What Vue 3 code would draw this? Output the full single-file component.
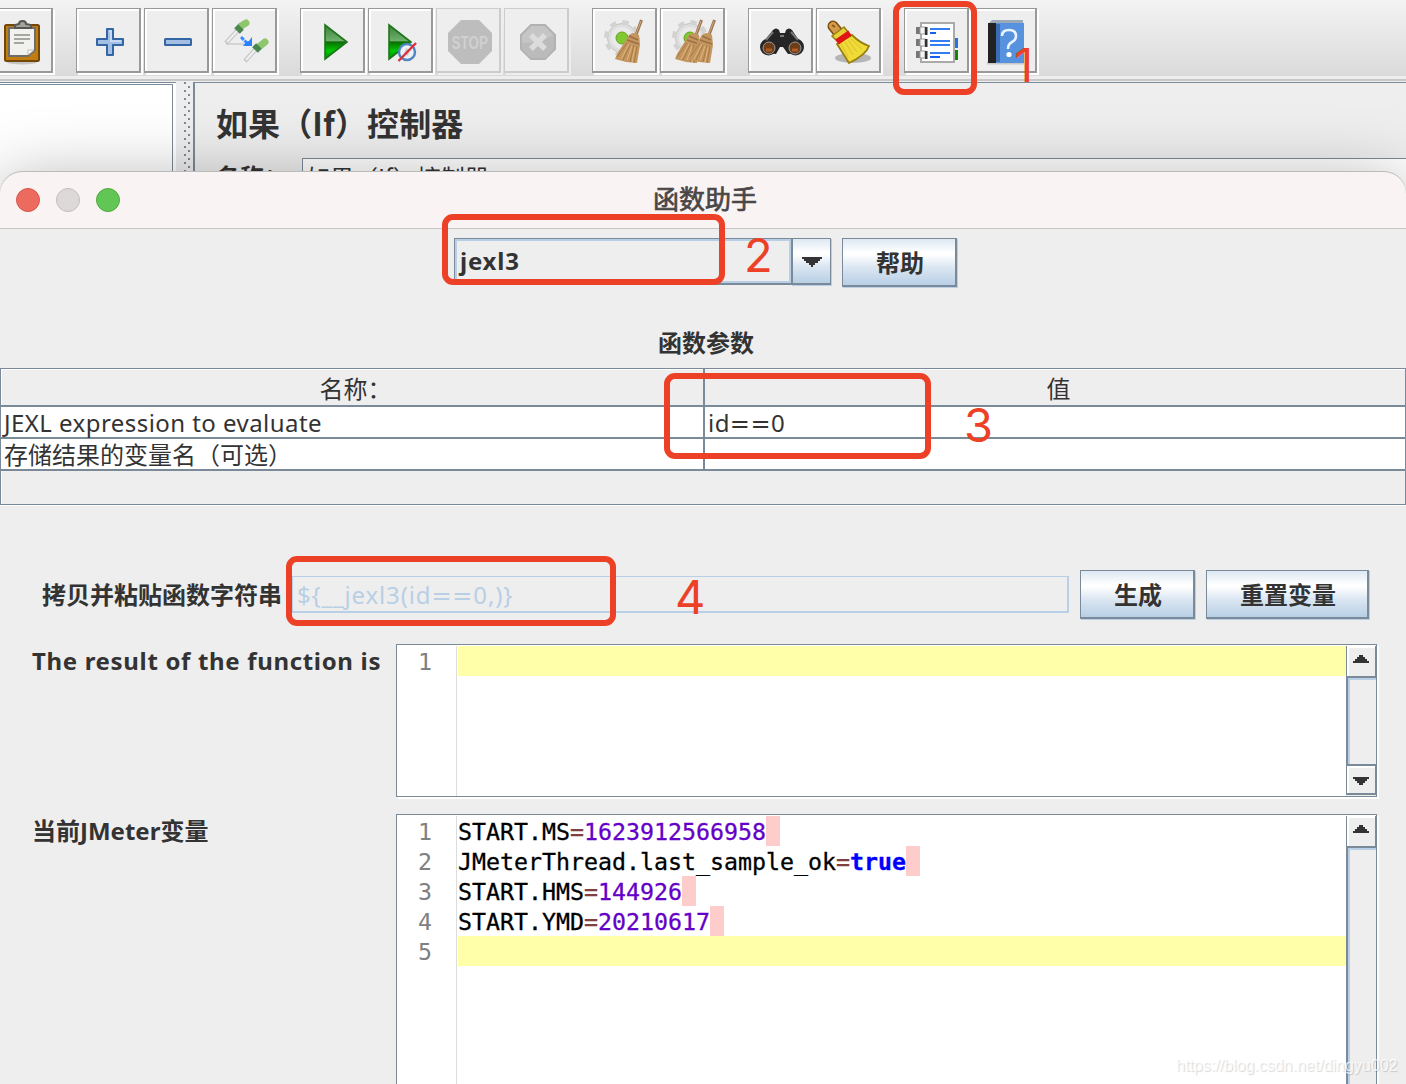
<template>
  <div class="screen">
    <div class="main-window">
      <div class="toolbar">
        <div v-for="(group, gi) in toolbar" :key="gi" class="tool-group">
          <button v-for="name in group" :key="name" class="tool" :class="{ disabled: name === 'stop' || name === 'shutdown' }">
            <svg v-if="name === 'paste'" viewBox="0 0 62 62">
              <ellipse cx="33" cy="53" rx="15" ry="2.5" fill="#c4c4c4" />
              <rect x="16" y="16" width="34" height="36" rx="1.5" fill="#c17d11" stroke="#744706" stroke-width="2" />
              <path d="M20 19h26v22l-7 6H20z" fill="#f1f1ee" stroke="#6d6d6a" stroke-width="2" />
              <path d="M39 46v-5h6z" fill="#fff" stroke="#bbb" />
              <path d="M25 26h16M25 30h16M25 34h10" stroke="#a5a5a2" stroke-width="2" />
              <path d="M26 19v-3l4-1c0-4 7-4 7 0l5 1v3z" fill="#a3a599" stroke="#555753" stroke-width="2" />
            </svg>
            <svg v-else-if="name === 'add'" viewBox="0 0 62 62">
              <path d="M30 20h6v10h10v6H36v10h-6V36H20v-6h10z" fill="#a3c0e4" stroke="#3465a4" stroke-width="2" stroke-linejoin="round" />
              <path d="M32 22h2v10h10" fill="none" stroke="#c6d9f0" stroke-width="2" />
            </svg>
            <svg v-else-if="name === 'remove'" viewBox="0 0 62 62">
              <rect x="20" y="30" width="26" height="6" rx=".5" fill="#a3c0e4" stroke="#3465a4" stroke-width="2" />
            </svg>
            <svg v-else-if="name === 'toggle'" viewBox="0 0 62 62">
              <path d="M13 35h18" stroke="#d4d4d4" stroke-width="2" />
              <path d="M25 21L13 34M43 40L32 52" stroke="#c4c4c4" stroke-width="4.5" />
              <path d="M25 21L14 33M43 40L33 51" stroke="#eee" stroke-width="2.5" />
              <path d="M28 17l5-3M47 37l5-4" stroke="#8dc66b" stroke-width="7" stroke-linecap="round" />
              <path d="M24 22l4-4M42 41l4-4" stroke="#4a8750" stroke-width="8" />
              <path d="M28 28l6 6" stroke="#3f8cff" stroke-width="3" stroke-dasharray="4 1" />
              <path d="M39 28v9H30l3-4 3-1z" fill="#2a80ff" />
            </svg>
            <svg v-else-if="name === 'start' || name === 'startNoPause'" viewBox="0 0 62 62">
              <defs>
                <linearGradient :id="name + 'Fill'" x1="0" y1="0" x2="0" y2="1">
                  <stop offset="0" stop-color="#3f7f3d" />
                  <stop offset=".46" stop-color="#6faf6c" />
                  <stop offset=".5" stop-color="#0b6d06" />
                  <stop offset=".75" stop-color="#00c400" />
                  <stop offset="1" stop-color="#009300" />
                </linearGradient>
              </defs>
              <path :transform="name === 'start' ? '' : 'translate(-4 0)'" d="M24 16v34l22-17z" :fill="`url(#${name}Fill)`" stroke="#1d751b" stroke-width="1.6" />
              <g v-if="name === 'startNoPause'">
                <circle cx="38" cy="43" r="8" fill="#edf1f5" stroke="#4d86c1" stroke-width="2.4" />
                <path d="M37 39l4 2-2 6-4-2z" fill="#c9cdd2" />
                <path d="M29.5 52L47 34" stroke="#dc3038" stroke-width="2.4" />
              </g>
            </svg>
            <svg v-else-if="name === 'stop'" viewBox="0 0 62 62">
              <path d="M24 11h18l13 13v18L42 55H24L11 42V24z" fill="#bdbdbd" />
              <text transform="translate(14.5 40) scale(.71 1)" class="stop-text">STOP</text>
            </svg>
            <svg v-else-if="name === 'shutdown'" viewBox="0 0 62 62">
              <path d="M26 16h14l10 10v14L40 50H26L16 40V26z" fill="#c5c5c5" stroke="#b2b2b2" stroke-width="2" />
              <path d="M17 34q17 0 32-8v14l-9 9H26l-9-9z" fill="#bbb" />
              <path d="M26 26l14 14M40 26L26 40" stroke="#dcdcdc" stroke-width="5.5" />
            </svg>
            <svg v-else-if="name === 'clear' || name === 'clearAll'" viewBox="0 0 62 62">
              <g transform="translate(29 29)">
                <circle r="14.5" fill="#dedede" stroke="#c4c4c4" />
                <circle r="15.8" fill="none" stroke="#d2d2d2" stroke-width="4.5" stroke-dasharray="6.2 6.2" />
                <circle r="11" fill="#e9e9e9" />
                <circle r="6" fill="#80c931" stroke="#62a31c" />
              </g>
              <g v-for="dx in (name === 'clear' ? [0] : [-8, 5])" :key="dx" :transform="`translate(${dx} 0)`">
                <path d="M48.500 11L43 26" stroke="#9b7452" stroke-width="3" />
                <path d="M48 12l-5 13" stroke="#d1ab7e" stroke-width="1" />
                <path d="M36 26q5-4 10 0l1 10-3 18-11-1-11-3 2-5z" fill="#c4965f" />
                <path d="M36 27l9 4M34 31l12 4" stroke="#9c7042" stroke-width="1.5" />
                <path d="M34 34L24 48M37 36l-7 15M41 36l-4 17M44 37l-3 17" stroke="#a67843" stroke-width="1" />
                <path d="M36 35l-8 15M39 37l-5 14M42 38l-3 15" stroke="#e0b57d" stroke-width="1" />
              </g>
            </svg>
            <svg v-else-if="name === 'search'" viewBox="0 0 62 62">
              <path d="M24 21q3-3 6 0l1 3h5l1-3q3-3 6 0l10 15-5 8-9 1-5-7h-3l-4 7-10-1-5-8z" fill="#252525" />
              <circle cx="19.500" cy="38" r="8.500" fill="#262626" />
              <circle cx="46.500" cy="38" r="8.500" fill="#262626" />
              <circle cx="20" cy="39" r="6" fill="#6e3d18" stroke="#999" />
              <circle cx="46" cy="39" r="6" fill="#6e3d18" stroke="#999" />
              <path d="M17 41h6M43 41h6" stroke="#a85e25" stroke-width="3" />
              <path d="M24 23l-7 8M42 23l7 8M31 27h4" stroke="#777" stroke-width="2" />
            </svg>
            <svg v-else-if="name === 'reset'" viewBox="0 0 62 62">
              <ellipse cx="36" cy="49" rx="18" ry="5" fill="#b5b5b5" />
              <path d="M16 17l8 10" stroke="#7e4c0d" stroke-width="11" stroke-linecap="round" />
              <path d="M16 17l8 10" stroke="#d49b4c" stroke-width="8" stroke-linecap="round" />
              <path d="M15 16l3 2" stroke="#8f5a18" stroke-width="2" />
              <path d="M15 27l12-9 4 5-11 9z" fill="#e8cf36" stroke="#958010" stroke-width="1.500" />
              <path d="M35 26q8 8 17 11-3 9-20 17-5-8-12-19z" fill="#f0da38" stroke="#958010" stroke-width="1.800" />
              <path d="M24 35l7 13M28 33l8 13M31 31l9 12M34 30l11 10" stroke="#dcc02a" stroke-width="1" />
              <path d="M20 33L33 24" stroke="#e01515" stroke-width="6" />
            </svg>
            <svg v-else-if="name === 'functions'" viewBox="0 0 62 62">
              <rect x="48" y="29" width="5" height="10" fill="#2b70dc" />
              <rect x="48" y="41" width="5" height="10" fill="#158506" />
              <rect x="16" y="14" width="33" height="39" fill="#fff" stroke="#aaa" stroke-width="2" />
              <g v-for="y in [18, 30, 42]" :key="y">
                <rect x="11" :y="y" width="5" height="7" fill="#777" />
                <rect x="15" :y="y" width="5" height="7" fill="#f4f4f4" stroke="#999" />
                <rect x="20" :y="y" width="2.500" height="8" fill="#333" />
              </g>
              <path d="M25 20h20M25 32h20M25 36h20M25 44h20" stroke="#347cf2" stroke-width="2" />
              <path d="M25 24h6M25 48h10" stroke="#1260ee" stroke-width="2" />
            </svg>
            <svg v-else viewBox="0 0 62 62">
              <path d="M14 54h37" stroke="#c8c8c8" stroke-width="3" />
              <path d="M15 15l4-4h31v4z" fill="#9ca9b8" />
              <path d="M15 14h9v40h-9z" fill="#222" />
              <path d="M23 14h28v40H23z" fill="#5792df" />
              <path d="M23 15h4v38h-4z" fill="#3a6db4" />
              <path d="M29 27q0-6 7-6t7 6q0 4-4 6t-4 7" fill="none" stroke="#eaf3ff" stroke-width="2.600" />
              <circle cx="36" cy="45.500" r="2.600" fill="#fff" />
            </svg>
          </button>
        </div>
      </div>
      <div class="workspace">
        <div class="tree-pane"></div>
        <div class="splitter"></div>
        <div class="editor-pane">
          <h1>如果（If）控制器</h1>
          <div class="name-row">
            <label>名称：</label>
            <div class="name-field">如果（If）控制器</div>
          </div>
        </div>
      </div>
    </div>

    <div class="dialog">
      <div class="title-bar">
        <div class="lights">
          <i class="close"></i><i class="minimize"></i><i class="zoom"></i>
        </div>
        <div class="window-title">函数助手</div>
      </div>

      <div class="picker">
        <div class="combo">
          <div class="combo-value">jexl3</div>
          <div class="combo-arrow">
            <svg width="20" height="10" viewBox="0 0 20 10" shape-rendering="crispEdges"><path d="M0 0h20v2h-2v2h-2v2h-3v2h-2v2H9V8H7V6H4V4H2V2H0z" fill="#333" /></svg>
          </div>
        </div>
        <button class="metal help">帮助</button>
      </div>

      <div class="params-title">函数参数</div>
      <div class="params">
        <div class="tr head"><div class="cell">名称：</div><div class="cell">值</div></div>
        <div class="tr">
          <div class="cell latin">JEXL expression to evaluate</div>
          <div class="cell latin">id<span class="wide">==</span>0</div>
        </div>
        <div class="tr">
          <div class="cell">存储结果的变量名（可选）</div>
          <div class="cell"></div>
        </div>
      </div>

      <div class="result-row">
        <label>拷贝并粘贴函数字符串</label>
        <div class="result-field">${__jexl3(id<span class="wide">==</span>0,)}</div>
        <button class="metal generate">生成</button>
        <button class="metal reset">重置变量</button>
      </div>

      <div v-for="area in areas" :key="area.label" class="area-row" :class="area.kind">
        <label>{{ area.label }}</label>
        <div class="editor">
          <div class="gutter">
            <div v-for="(line, i) in area.lines" :key="i" class="number">{{ i + 1 }}</div>
          </div>
          <div class="code">
            <div v-for="(line, i) in area.lines" :key="i" class="line" :class="{ current: !line.key }">
              <template v-if="line.key">{{ line.key }}<span class="op">=</span><span :class="line.type">{{ line.value }}</span><span class="eol"></span></template>
            </div>
          </div>
          <div class="scrollbar">
            <div class="scroll-button">
              <svg width="16" height="8" viewBox="0 0 16 8" shape-rendering="crispEdges"><path d="M0 8V6h2V4h2V2h2V0h4v2h2v2h2v2h2v2z" fill="#333" /></svg>
            </div>
            <div class="track"></div>
            <div class="scroll-button down">
              <svg width="16" height="8" viewBox="0 0 16 8" shape-rendering="crispEdges"><path d="M0 0v2h2v2h2v2h2v2h4V6h2V4h2V2h2V0z" fill="#333" /></svg>
            </div>
          </div>
        </div>
      </div>
    </div>

    <!-- numbered step marks over the windows -->
    <div v-for="n in 4" :key="n" class="mark" :class="'mark-' + n"></div>
    <div v-for="n in 4" :key="'n' + n" class="step" :class="'step-' + n">{{ n }}</div>
    <div class="watermark">https://blog.csdn.net/dingyu002</div>
  </div>
</template>

<script setup>
const toolbar = [
  ['paste'],
  ['add', 'remove', 'toggle'],
  ['start', 'startNoPause', 'stop', 'shutdown'],
  ['clear', 'clearAll'],
  ['search', 'reset'],
  ['functions', 'help'],
];

const areas = [
  { label: 'The result of the function is', kind: 'short', lines: [{}] },
  {
    label: '当前JMeter变量',
    kind: 'tall',
    lines: [
      { key: 'START.MS', value: '1623912566958', type: 'num' },
      { key: 'JMeterThread.last_sample_ok', value: 'true', type: 'bool' },
      { key: 'START.HMS', value: '144926', type: 'num' },
      { key: 'START.YMD', value: '20210617', type: 'num' },
      {},
    ],
  },
];
</script>

<style>
body {
  margin: 0;
  background: #eee;
}
</style>

<style scoped>
.screen {
  position: relative;
  width: 1406px;
  height: 1084px;
  overflow: hidden;
  background: #eee;
  color: #333;
  font-family: "Noto Sans", "Noto Sans CJK SC", sans-serif;
  font-size: 24px;
}

.screen * {
  box-sizing: border-box;
}

button {
  font: inherit;
  color: inherit;
  margin: 0;
  padding: 0;
}

/* main window */
.toolbar {
  display: flex;
  gap: 23px;
  height: 82px;
  padding-top: 8px;
  margin-left: -12px;
  background: linear-gradient(#f3f3f3 0, #dadada 76px, #eee 76px, #eee 79px, #c8c8c8 79px, #c8c8c8 81px, #eee 81px);
}

.tool-group {
  display: flex;
  gap: 3px;
}

.tool {
  width: 65px;
  height: 65px;
  background: #eee;
  border: solid #999;
  border-width: 1px 2px 2px 1px;
  box-shadow: inset 2px 2px #fff, 2px 2px #fff;
}

.tool.disabled {
  border-color: #ccc;
  box-shadow: 2px 2px #eee;
}

.tool svg {
  display: block;
  width: 62px;
  height: 62px;
}

.stop-text {
  font: bold 19px "Liberation Sans", sans-serif;
  fill: #d0d0d0;
}

.workspace {
  display: flex;
  height: 110px;
}

.tree-pane {
  width: 176px;
  border-top: 1px solid #7a8a99;
  background: linear-gradient(#7a8a99, #7a8a99) 0 1px / 172px 1px no-repeat, linear-gradient(#7a8a99, #7a8a99) 172px 1px / 1px 110px no-repeat, #fff;
}

.splitter {
  width: 17px;
  background: radial-gradient(circle at 2px 2px, #7a8a99 1.2px, transparent 1.3px) 7px 7px / 8px 8px repeat-y, radial-gradient(circle at 2px 2px, #7a8a99 1.2px, transparent 1.3px) 11px 11px / 8px 8px repeat-y, #eee;
}

.editor-pane {
  flex: 1;
  border-top: 1px solid #7a8a99;
  border-left: 2px solid #7a8a99;
  padding: 17px 0 0 21px;
  font-family: "Noto Sans CJK SC", sans-serif;
}

h1 {
  margin: 0;
  height: 58px;
  font-size: 32px;
  line-height: 45px;
  letter-spacing: .1px;
}

.name-row {
  display: flex;
  line-height: 35px;
}

.name-row label {
  width: 86px;
  font-weight: bold;
}

.name-field {
  flex: 1;
  height: 36px;
  padding-left: 3px;
  border: 1px solid #7a8a99;
  border-right: 0;
  background: #fff;
}

/* function helper dialog */
.dialog {
  position: absolute;
  left: 0;
  top: 171px;
  width: 1406px;
  height: 913px;
  background: #eee;
  border-radius: 22px 22px 0 0;
  box-shadow: 0 12px 70px rgba(0, 0, 0, .34);
}

.title-bar {
  display: flex;
  align-items: center;
  height: 58px;
  background: #f9f3f3;
  border-bottom: 1px solid #c9c4c4;
  border-radius: 22px 22px 0 0;
  box-shadow: inset 0 1px #bbb;
}

.lights {
  display: flex;
  gap: 16px;
  width: 120px;
  padding-left: 16px;
}

.lights i {
  width: 24px;
  height: 24px;
  border-radius: 50%;
  border: 1px solid #d6574d;
  background: #ed6a5e;
}

.lights .minimize {
  border-color: #c3bdbd;
  background: #ded9d9;
}

.lights .zoom {
  border-color: #52a941;
  background: #61c654;
}

.window-title {
  flex: 1;
  padding: 0 116px 4px 0;
  text-align: center;
  font-family: "Noto Sans CJK SC", sans-serif;
  font-size: 26px;
  line-height: 52px;
  color: #4a4646;
  -webkit-text-stroke: .7px #4a4646;
}

.picker {
  display: flex;
  gap: 11px;
  padding: 9px 0 0 454px;
  height: 85px;
}

.combo {
  display: flex;
  width: 377px;
  height: 47px;
  font-weight: bold;
}

.combo-value {
  width: 337px;
  padding-left: 5px;
  line-height: 43px;
  letter-spacing: .8px;
  border: solid #7a8a99;
  border-width: 1px 0 2px 1px;
  box-shadow: inset 0 0 0 2px #b8cfe5;
}

.combo-arrow {
  display: flex;
  align-items: center;
  justify-content: center;
  width: 40px;
  padding-top: 2px;
}

.metal,
.combo-arrow {
  border: solid #7a8a99;
  border-width: 1px 2px 2px 1px;
  box-shadow: 1px 1px #b8cfe5;
  background: linear-gradient(#dde8f3 0, #fff 30%, #fff 34%, #dbe6f2 62%, #b8cfe5 100%);
}

.combo-arrow {
  border-width: 1px 1px 2px 2px;
}

.metal {
  height: 49px;
  padding: 2px 0 0 2px;
  font-weight: bold;
  line-height: 44px;
}

.help {
  width: 115px;
}

.params-title {
  height: 54px;
  padding-left: 6px;
  font-weight: bold;
  line-height: 58px;
  text-align: center;
}

.params {
  height: 137px;
  border: 1px solid #7a8a99;
  box-shadow: inset 1px 1px #fff, 0 1px #fff;
}

.tr {
  display: grid;
  grid-template-columns: 704px 1fr;
  height: 32px;
  border-bottom: 2px solid #7a8a99;
  background: #fff;
  line-height: 31px;
}

.cell {
  padding-left: 3px;
  white-space: nowrap;
}

.latin {
  letter-spacing: .45px;
}

/* equals signs are drawn wider than the text font has them */
.wide {
  font-family: "DejaVu Sans", sans-serif;
  line-height: 1;
}

.cell:first-child {
  border-right: 2px solid #7a8a99;
}

.head {
  height: 38px;
  background: transparent;
  text-align: center;
  line-height: 40px;
}

.head .cell {
  padding-left: 7px;
}

.result-row {
  display: flex;
  padding: 65px 0 0 42px;
  height: 139px;
}

.result-row label {
  width: 250px;
  font-weight: bold;
  line-height: 50px;
}

.result-field {
  width: 777px;
  height: 37px;
  margin: 6px 11px 0 0;
  padding-left: 4px;
  border: solid #b8cfe5;
  border-width: 1px 2px 2px 1px;
  color: #b8cfe5;
  letter-spacing: .85px;
  line-height: 36px;
}

.generate {
  width: 115px;
}

.metal.reset {
  width: 163px;
  margin-left: 11px;
}

.area-row {
  display: flex;
  padding-left: 32px;
}

.area-row label {
  width: 364px;
  font-weight: bold;
  line-height: 34px;
  white-space: nowrap;
}

.short label {
  letter-spacing: .67px;
}

.short {
  height: 170px;
}

.editor {
  display: flex;
  width: 981px;
  height: 153px;
  padding-top: 1px;
  border: 1px solid #7a8a99;
  box-shadow: 2px 2px #fff;
  background: #fff;
  font-family: "DejaVu Sans Mono", monospace;
  font-size: 23.25px;
  line-height: 32px;
}

.tall .editor {
  height: 330px;
}

.gutter {
  width: 60px;
  padding-right: 24px;
  border-right: 1px solid #ddd;
  text-align: right;
  color: #808080;
}

.number {
  height: 30px;
}

.code {
  flex: 1;
  padding-left: 1px;
  color: #000;
  -webkit-text-stroke: .3px currentColor;
}

.line {
  display: flex;
  height: 30px;
}

.current {
  background: #ffffaa;
}

.op {
  color: #804040;
}

.num {
  color: #6400c8;
}

.bool {
  color: #00f;
  font-weight: bold;
}

.eol {
  width: 14px;
  background: #ffcccc;
}

.scrollbar {
  display: flex;
  flex-direction: column;
  width: 30px;
  background: #eee;
}

.scroll-button {
  display: flex;
  align-items: center;
  justify-content: center;
  height: 32px;
  padding-bottom: 4px;
  border: solid #7a8a99;
  border-width: 0 1px 2px 1px;
  box-shadow: inset 2px 2px #fff;
}

.track {
  flex: 1;
  border-left: 2px solid #7a8a99;
  border-bottom: 2px solid #7a8a99;
  box-shadow: inset 2px 2px #b8cfe5;
}

.scroll-button.down {
  height: 29px;
  padding: 2px 0 0;
  margin-bottom: 1px;
}

/* step marks */
.mark {
  position: absolute;
  border: 6px solid #ec4126;
  border-radius: 11px;
}

.mark-1 { left: 893px; top: 1px; width: 84px; height: 94px; }
.mark-2 { left: 442px; top: 214px; width: 283px; height: 71px; }
.mark-3 { left: 664px; top: 373px; width: 267px; height: 86px; }
.mark-4 { left: 286px; top: 556px; width: 330px; height: 70px; }

.step {
  position: absolute;
  color: #ec4126;
  font-family: Inter, sans-serif;
  font-size: 47px;
  line-height: 48px;
}

.step-1 { left: 1014px; top: 41px; }
.step-2 { left: 744px; top: 231px; }
.step-3 { left: 964px; top: 401px; }
.step-4 { left: 675px; top: 573px; }

.watermark {
  position: absolute;
  left: 1176px;
  top: 1056px;
  color: rgba(255, 255, 255, .8);
  font-family: "Liberation Sans", sans-serif;
  font-size: 16px;
  line-height: 20px;
  text-shadow: 1px 1px 1px rgba(0, 0, 0, .16);
}
</style>
